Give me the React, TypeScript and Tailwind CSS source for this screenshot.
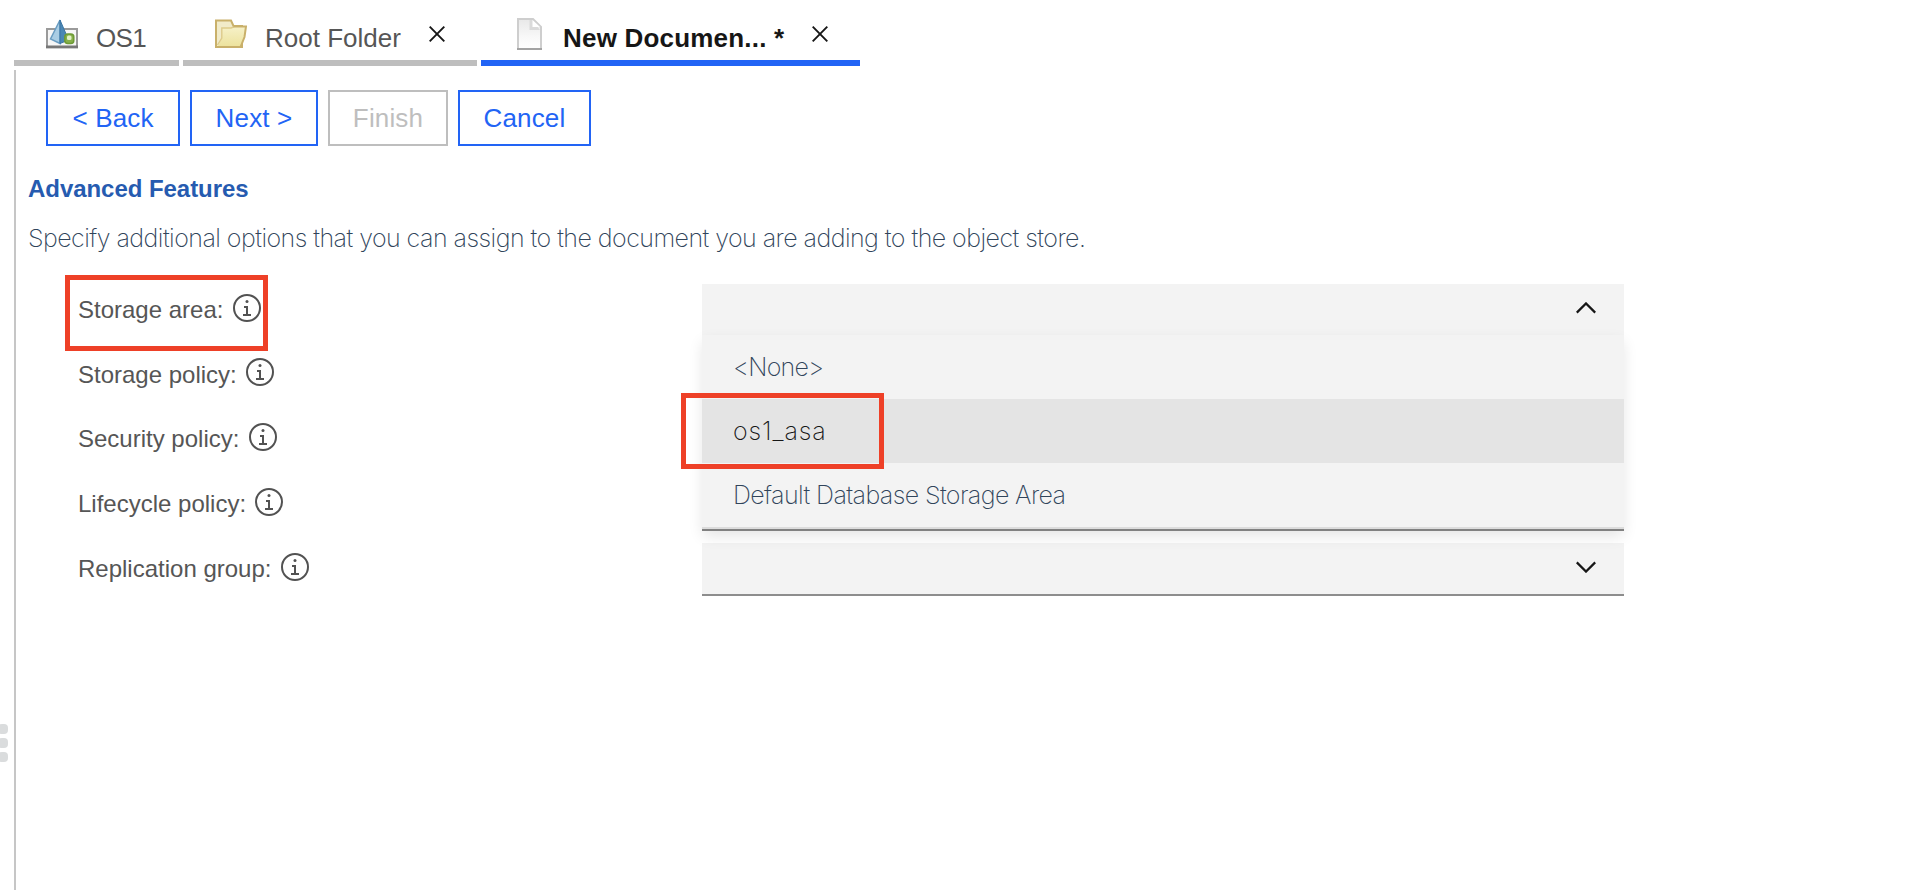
import React from "react";

const SANS = "font-['Liberation_Sans',Arial,sans-serif]";
const THIN = "font-['Inter','Roboto',sans-serif] font-extralight";

function StoreIcon() {
  return (
    <svg width="32" height="30" viewBox="0 0 32 30" className="block">
      <rect x="1" y="10" width="30" height="18.5" fill="#f6f6f6" stroke="#9a9a9a" strokeWidth="2" />
      <rect x="0" y="26.5" width="32" height="2.5" fill="#777777" />
      <path d="M14 1 L4.5 20 L14 24.5 Z" fill="#a9cde4" stroke="#6a9dc2" strokeWidth="1.5" />
      <path d="M14 1 L20.5 16 L20 22 L14 24.5 Z" fill="#4a87b5" stroke="#3a74a3" strokeWidth="1" />
      <rect x="18.8" y="15" width="9" height="9.5" rx="3" fill="#86b04a" stroke="#6d9a35" strokeWidth="1.5" />
      <rect x="21" y="16.5" width="4.5" height="4.5" rx="1.5" fill="#e2f1c6" />
    </svg>
  );
}

function FolderIcon() {
  return (
    <svg width="32" height="30" viewBox="0 0 32 30" className="block">
      <defs>
        <linearGradient id="folder" x1="0" y1="0" x2="0" y2="1">
          <stop offset="0" stopColor="#f6f1c8" />
          <stop offset="1" stopColor="#ece29c" />
        </linearGradient>
      </defs>
      <path d="M1 28 V1.5 H16 L18.5 7 H27 V28 Z" fill="#f1ebc9" stroke="#c9b06a" strokeWidth="2" />
      <path d="M7 9 H16 L19 7.8 H30.8 L29.5 18 L25.5 28 H2.5 L6.5 20 Z" fill="url(#folder)" />
      <path d="M2.5 26 L6.8 19 V9 H16 L19 7.8" fill="none" stroke="#ddcb8b" strokeWidth="1.4" />
      <path d="M18.5 7.5 H31 L29.5 18 L25.5 28 H1" fill="none" stroke="#c9b06a" strokeWidth="2" />
    </svg>
  );
}

function PageIcon() {
  return (
    <svg width="25" height="32" viewBox="0 0 25 32" className="block">
      <defs>
        <linearGradient id="page" x1="0" y1="0" x2="0" y2="1">
          <stop offset="0" stopColor="#e8e8e8" />
          <stop offset="0.6" stopColor="#f8f8f8" />
          <stop offset="1" stopColor="#ffffff" />
        </linearGradient>
      </defs>
      <path d="M1 1 H16 L24 9 V31 H1 Z" fill="url(#page)" stroke="#cecece" strokeWidth="2" />
      <path d="M12.5 2 V12 H23 L15.5 2 Z" fill="#dadada" />
      <path d="M15.5 2 V9 H23 Z" fill="#ffffff" />
      <path d="M0 31 H25" stroke="#a3a3a3" strokeWidth="2" />
    </svg>
  );
}

function CloseIcon() {
  return (
    <svg width="16" height="16" viewBox="0 0 16 16" className="block">
      <path d="M0.7 0.7 L15.3 15.3 M15.3 0.7 L0.7 15.3" stroke="#161616" strokeWidth="1.9" />
    </svg>
  );
}

function InfoIcon() {
  return (
    <svg width="32" height="32" viewBox="0 0 32 32" className="block">
      <circle cx="16" cy="16" r="13" fill="none" stroke="#525252" strokeWidth="2" />
      <path d="M17 22 V14 H13 V16 H15 V22 H12 V24 H20 V22 Z" fill="#525252" />
      <circle cx="16" cy="9.5" r="1.5" fill="#525252" />
    </svg>
  );
}

function Chevron({ up = false }: { up?: boolean }) {
  return (
    <svg width="20" height="12" viewBox="0 0 20 12" className="block">
      <path
        d={up ? "M0.8 10.6 L10 1.4 L19.2 10.6" : "M0.8 1.4 L10 10.6 L19.2 1.4"}
        fill="none"
        stroke="#161616"
        strokeWidth="2.2"
      />
    </svg>
  );
}

function Button({ label, width, disabled = false }: { label: string; width: string; disabled?: boolean }) {
  return (
    <button
      disabled={disabled}
      className={`flex h-14 items-center justify-center border-2 bg-white text-[26px] tracking-[0.15px] whitespace-nowrap ${width} ${
        disabled ? "border-[#bebebe] text-[#bebebe]" : "border-[#2264f5] text-[#2264f5]"
      }`}
    >
      {label}
    </button>
  );
}

const rows = [
  { label: "Storage area:", height: "h-16", pad: "pt-[10px]", gap: "gap-2" },
  { label: "Storage policy:", height: "h-[65px]", pad: "pt-[11px]", gap: "gap-[7px]" },
  { label: "Security policy:", height: "h-[65px]", pad: "pt-[10px]", gap: "gap-2" },
  { label: "Lifecycle policy:", height: "h-[65px]", pad: "pt-[10px]", gap: "gap-[7px]" },
  { label: "Replication group:", height: "h-[65px]", pad: "pt-[10px]", gap: "gap-2" },
];

export default function App() {
  return (
    <div className={`relative flex h-[890px] w-[1920px] flex-col overflow-hidden bg-white ${SANS}`}>
      <nav className="flex h-[66px] gap-1 pl-3.5 text-[26px] text-[#565656]">
        <div className="flex w-[165px] items-start border-b-6 border-[#bebebe] pl-8">
          <div className="mt-[19px]"><StoreIcon /></div>
          <span className="mt-[18px] ml-[18px] leading-10 tracking-[-0.6px]">OS1</span>
        </div>
        <div className="flex w-[294px] items-start border-b-6 border-[#bebebe] pl-8">
          <div className="mt-[19px]"><FolderIcon /></div>
          <span className="mt-[18px] ml-[18px] w-[164px] leading-10">Root Folder</span>
          <div className="mt-[26px]"><CloseIcon /></div>
        </div>
        <div className="flex w-[379px] items-start border-b-6 border-[#2264f5] pl-9 font-bold text-[#161616]">
          <div className="mt-[18px]"><PageIcon /></div>
          <span className="mt-[18px] ml-[21px] w-[249px] leading-10 tracking-[0.2px] whitespace-nowrap">
            New Documen... *
          </span>
          <div className="mt-[26px]"><CloseIcon /></div>
        </div>
      </nav>

      <main className="mt-1 ml-3.5 flex flex-1 flex-col border-l-2 border-[#c6c6c6]">
        <div className="mt-5 ml-[30px] flex gap-2.5">
          <Button label="< Back" width="w-[134px]" />
          <Button label="Next >" width="w-[128px]" />
          <Button label="Finish" width="w-[120px]" disabled />
          <Button label="Cancel" width="w-[133px]" />
        </div>

        <h1 className="mt-[27px] ml-3 text-2xl leading-8 font-bold tracking-[-0.05px] text-[#265bb0]">
          Advanced Features
        </h1>
        <p className={`mt-[17px] ml-3 text-[25px] leading-8 tracking-[-0.54px] whitespace-nowrap text-[#30445a] ${THIN}`}>
          Specify additional options that you can assign to the document you are adding to the object store.
        </p>

        <div className="mt-[30px] ml-[62px] flex">
          <div className="relative w-[624px]">
            {rows.map((r) => (
              <div key={r.label} className={`flex items-start text-2xl text-[#565656] ${r.height} ${r.gap}`}>
                <span className={`leading-8 ${r.pad}`}>{r.label}</span>
                <span className="pt-2"><InfoIcon /></span>
              </div>
            ))}
            <div className="absolute -top-[9px] left-[-13px] h-[76px] w-[203px] border-5 border-[#ee4027]" />
          </div>

          <div className="relative flex w-[922px] flex-col justify-between pb-3">
            <div className="flex h-[52px] items-start justify-end bg-[#f3f3f3] pt-[18px] pr-7">
              <Chevron up />
            </div>
            <div className="flex h-[53px] items-start justify-end border-b-2 border-[#8d8d8d] bg-[#f3f3f3] pt-[18px] pr-7">
              <Chevron />
            </div>
            <ul
              className={`absolute top-[51px] left-0 w-full border-b-2 border-[#808080] bg-[#f3f3f3] text-[25px] text-[#30445a] shadow-[0_6px_14px_-1px_rgba(0,0,0,0.11)] ${THIN}`}
            >
              <li className="flex h-16 items-center pt-0.5 pl-[31px] tracking-[-0.8px]">&lt;None&gt;</li>
              <li className="flex h-16 items-center bg-[#e4e4e4] pt-0.5 pl-[31px] tracking-[0.9px] text-[#161616]">
                os1_asa
              </li>
              <li className="flex h-[66px] items-center border-b-2 border-[#dcdcdc] pt-0.5 pl-[31px] tracking-[-0.6px]">
                Default Database Storage Area
              </li>
            </ul>
            <div className="absolute top-[109px] left-[-21px] h-[76px] w-[203px] border-5 border-[#ee4027]" />
          </div>
        </div>
      </main>

      <div className="absolute top-[724px] left-[-2px] flex flex-col gap-1">
        <span className="size-2.5 rounded-[4px] bg-[#dadcdd]" />
        <span className="size-2.5 rounded-[4px] bg-[#dadcdd]" />
        <span className="size-2.5 rounded-[4px] bg-[#dadcdd]" />
      </div>
    </div>
  );
}
